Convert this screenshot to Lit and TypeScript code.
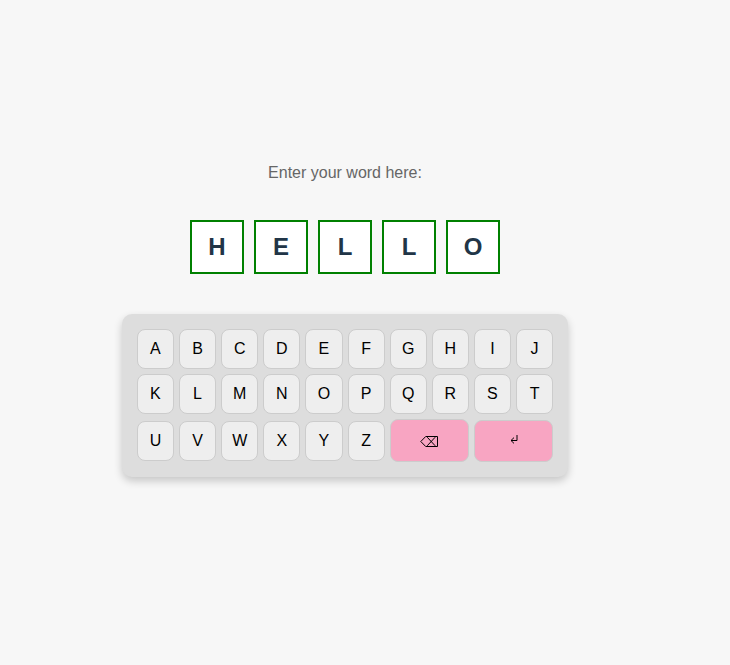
import { LitElement, html, css } from "lit";
import { customElement, property, state } from "lit/decorators.js";

@customElement("letter-tile")
class LetterTile extends LitElement {
  static styles = css`
    :host {
      box-sizing: border-box;
      width: 54px;
      height: 54px;
      border: 2px solid green;
      background: #fff;
      color: #213547;
      display: flex;
      align-items: center;
      justify-content: center;
      font-size: 24px;
      font-weight: 700;
      line-height: 36px;
    }
  `;
  @property() letter = "";
  render() {
    return html`${this.letter}`;
  }
}

@customElement("key-board")
class KeyBoard extends LitElement {
  static styles = css`
    :host {
      box-sizing: border-box;
      display: grid;
      grid-template-columns: repeat(10, 1fr);
      grid-template-rows: 40px 40px 43px;
      gap: 5px;
      align-items: center;
      width: 446.25px;
      height: 163px;
      padding: 15px;
      border-radius: 10px;
      background: #ddd;
      box-shadow: 0 4px 8px rgba(0, 0, 0, 0.2);
    }
    button {
      box-sizing: border-box;
      height: 40px;
      min-width: 0;
      padding: 0;
      display: flex;
      align-items: center;
      justify-content: center;
      border: 1px solid #ccc;
      border-radius: 8px;
      background: #eee;
      color: #000;
      font: 16px "Liberation Sans", Arial, sans-serif;
    }
    .wide {
      grid-column: span 2;
      height: 43px;
      background: #f8a5c2;
    }
    .enter {
      height: 42px;
      align-self: end;
    }
    svg {
      display: block;
      fill: none;
      stroke: #000;
    }
    .back svg {
      margin-top: 2px;
    }
    .enter svg {
      margin-bottom: 3px;
    }
  `;
  private press(key: string) {
    this.dispatchEvent(new CustomEvent("press", { detail: key }));
  }
  render() {
    return html`
      ${[..."ABCDEFGHIJKLMNOPQRSTUVWXYZ"].map(
        (key) => html`<button @click=${() => this.press(key)}>${key}</button>`
      )}
      <button class="wide back" aria-label="Backspace" @click=${() => this.press("Backspace")}>
        <svg width="18" height="11" viewBox="0 0 18 11">
          <path d="M.8 5.5 5.7.5H17.5v10H5.7ZM7.2 1.2l8 8.6M15.2 1.2l-8 8.6" stroke-width="1" />
        </svg>
      </button>
      <button class="wide enter" aria-label="Enter" @click=${() => this.press("Enter")}>
        <svg width="8" height="9" viewBox="0 0 8 9">
          <path d="M7 0v5.5H1M4 2.6 1 5.5l3 2.9" stroke-width="1" />
        </svg>
      </button>
    `;
  }
}

@customElement("app-root")
class AppRoot extends LitElement {
  static styles = css`
    :host {
      box-sizing: border-box;
      display: flex;
      flex-direction: column;
      align-items: center;
      height: 665px;
      padding: 164px 40px 0 0;
      background: #f7f7f7;
      font-family: "Liberation Sans", Arial, sans-serif;
    }
    p {
      margin: 0 0 38px;
      font-size: 16px;
      line-height: 18px;
      color: #666;
    }
    .word {
      display: flex;
      gap: 10px;
      margin-bottom: 40px;
    }
  `;
  @state() private word = "HELLO";

  private onPress(e: CustomEvent<string>) {
    if (e.detail === "Backspace") this.word = this.word.slice(0, -1);
    else if (e.detail !== "Enter" && this.word.length < 5) this.word += e.detail;
  }
  render() {
    return html`
      <p>Enter your word here:</p>
      <div class="word">
        ${[0, 1, 2, 3, 4].map((i) => html`<letter-tile .letter=${this.word[i] ?? ""}></letter-tile>`)}
      </div>
      <key-board @press=${this.onPress}></key-board>
    `;
  }
}
